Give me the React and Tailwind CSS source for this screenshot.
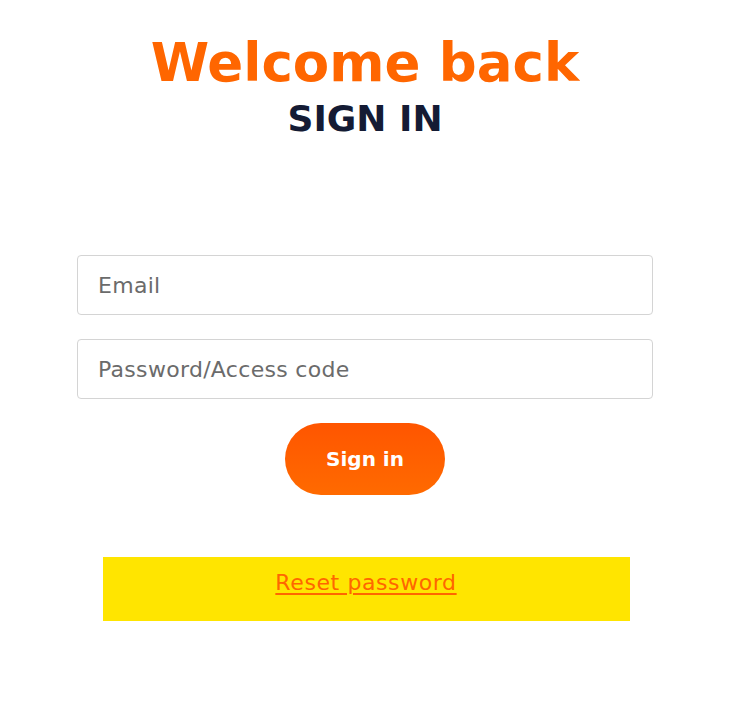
import React, { useState } from 'react';

const App = () => {
  const [email, setEmail] = useState('');
  const [password, setPassword] = useState('');

  return (
    <div className="min-h-screen bg-white pr-[5px] font-['DejaVu_Sans',_'Liberation_Sans',_sans-serif]">
      <div className="flex flex-col items-center pt-[32px]">
        <h1 className="text-[53px] leading-[62px] font-bold text-[#ff6600]">
          Welcome back
        </h1>
        <h2 className="mt-[3px] text-[36px] leading-[44px] font-bold text-[#141b34]">
          SIGN IN
        </h2>

        <form className="mt-[114px] w-[576px] flex flex-col gap-6" onSubmit={(e) => e.preventDefault()}>
          <input
            type="email"
            value={email}
            onChange={(e) => setEmail(e.target.value)}
            placeholder="Email"
            className="h-[60px] w-full rounded border border-[#d4d4d4] px-5 text-[22px] tracking-[0.3px] text-gray-800 placeholder:text-[#6b6b6b] outline-none"
          />
          <input
            type="password"
            value={password}
            onChange={(e) => setPassword(e.target.value)}
            placeholder="Password/Access code"
            className="h-[60px] w-full rounded border border-[#d4d4d4] px-5 text-[22px] tracking-[0.3px] text-gray-800 placeholder:text-[#6b6b6b] outline-none"
          />
          <button
            type="submit"
            className="mx-auto h-[72px] w-[160px] rounded-full bg-gradient-to-b from-[#ff5500] to-[#ff6a00] text-[20px] font-bold text-white"
          >
            Sign in
          </button>
        </form>

        <div className="mt-[62px] ml-[2px] flex h-[64px] w-[527px] justify-center bg-[#ffe500] pt-[11px]">
          <a href="#" className="text-[22px] leading-[30px] tracking-[0.6px] text-[#ff6600] underline underline-offset-[3px] decoration-2">
            Reset password
          </a>
        </div>
      </div>
    </div>
  );
};

export default App;
